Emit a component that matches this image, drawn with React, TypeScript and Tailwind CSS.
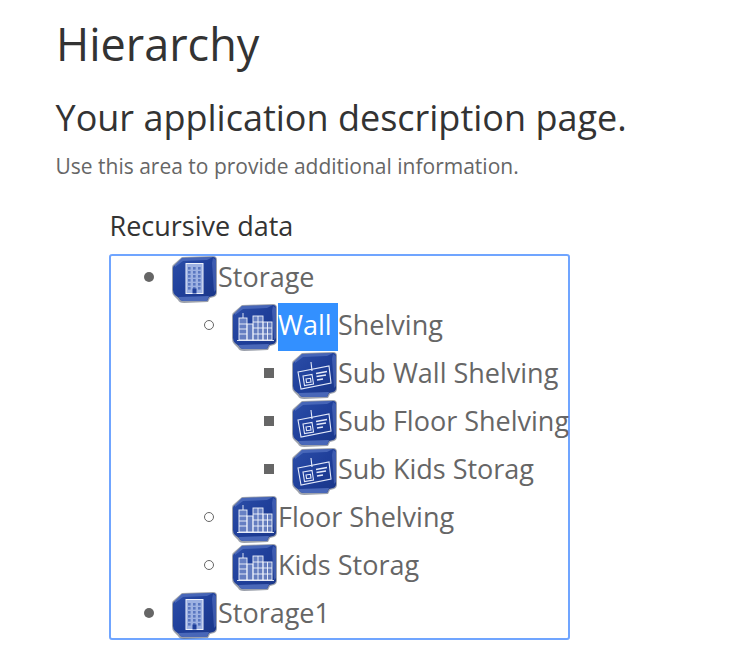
type Kind = "tower" | "city" | "plan";
type Mark = "disc" | "circle" | "square";

function NodeIcon({ kind }: { kind: Kind }) {
  const id = `grad-${kind}`;
  return (
    <svg width="48" height="48" viewBox="0 0 48 48" className="block shrink-0 blur-[0.4px]">
      <defs>
        <linearGradient id={id} x1="0" y1="0" x2="1" y2="1">
          <stop offset="0" stopColor="#2c4ea8" />
          <stop offset="0.5" stopColor="#1f3f9a" />
          <stop offset="1" stopColor="#1a3688" />
        </linearGradient>
      </defs>
      <path d="M12 2 L43 1 Q47 1 47 5 L47 37 Q47 41 44 42 L40 43 L38 47 L14 48 Q9 48 8 45 L4 41 Q2 39 2 35 L2 13 Q2 10 4 9 Z" fill="#5a6274" opacity="0.6" />
      <path d="M12 3 L43 2 Q46 2 46 5 L46 37 Q46 40 43 41 L39 42 L37 46 L14 46 Q10 46 9 43 L5 40 Q3 38 3 35 L3 13 Q3 11 5 10 Z" fill={`url(#${id})`} />
      <path d="M12 3 L43 2 L37 5 L13 6 L5 12 L5 10 Z" fill="#5d7bc8" opacity="0.6" />
      <path d="M9 42 L39 41 L37 46 L14 46 Q10 46 9 43 Z" fill="#4f6dbd" opacity="0.9" />
      <path d="M43 3 L46 5 L46 35 L44 37 L42 8 Z" fill="#5e7ac8" opacity="0.5" />
      {kind === "tower" && (
        <g>
          <rect x="16" y="8.5" width="17" height="30" fill="#9db1e2" stroke="#eef2fc" strokeWidth="1" />
          <g fill="#5a77c0">
            {[12, 16, 20, 24, 28, 32].map((y) =>
              [18, 23, 28].map((x) => <rect key={`${x}-${y}`} x={x} y={y} width="2.6" height="2.6" />),
            )}
          </g>
          <rect x="22.5" y="33.5" width="4" height="5" fill="#1f3f9a" />
        </g>
      )}
      {kind === "city" && (
        <g stroke="#f2f5fd" fill="#a9bbe8" fillOpacity="0.5" strokeWidth="0.9">
          <rect x="9" y="15" width="8" height="22" />
          <rect x="17" y="21" width="6" height="16" />
          <rect x="23" y="13" width="10" height="24" />
          <rect x="33" y="19" width="9" height="18" />
          <path d="M7 37.5 H44 M13 10 V15 M9 21 H17 M9 26 H17 M9 31 H17 M23 19 H33 M23 25 H33 M23 31 H33 M33 25 H42 M33 31 H42 M28 13 V37 M37.5 19 V37" fill="none" />
        </g>
      )}
      {kind === "plan" && (
        <g stroke="#e4eafa" fill="none" strokeWidth="1.1">
          <path d="M8 21 L39 15 L41 32 L11 38 Z" />
          <path d="M13 25 L22 23.5 L23.5 33 L14.5 34.5 Z M16 28 L20.5 27.3 L21 31 L16.6 31.7 Z" />
          <path d="M26 22.5 L37 20.5 M26.5 25.5 L36 24 M27 29 L33 28" strokeWidth="1.4" />
          <path d="M21 11 L22 20" />
        </g>
      )}
    </svg>
  );
}

function Marker({ mark }: { mark: Mark }) {
  if (mark === "disc") return <span className="mt-[17px] mr-4 -ml-[26px] size-2.5 shrink-0 rounded-full bg-[#666]" />;
  if (mark === "circle") return <span className="mt-[17px] mr-4 -ml-[26px] size-2.5 shrink-0 rounded-full border border-[#666]" />;
  return <span className="mt-[17px] mr-4 -ml-[26px] size-2.5 shrink-0 bg-[#666]" />;
}

function Label({ kind, mark, children }: { kind: Kind; mark: Mark; children: React.ReactNode }) {
  return (
    <div className="flex h-12 items-start whitespace-pre">
      <Marker mark={mark} />
      <NodeIcon kind={kind} />
      {children}
    </div>
  );
}

function T({ children, selected }: { children: React.ReactNode; selected?: boolean }) {
  return selected ? (
    <span className="h-12 w-[60px] bg-[#3390ff] pb-1 leading-[44px] text-white">{children}</span>
  ) : (
    <span className="h-12 pb-1 leading-[44px]">{children}</span>
  );
}

export default function App() {
  return (
    <div className="h-[671px] overflow-hidden bg-white px-14 font-['Open_Sans','Noto_Sans',sans-serif] text-[#666]">
      <h1 className="pt-[14px] text-[45px] leading-[60px] font-normal text-[#333]">Hierarchy</h1>
      <h2 className="mt-[22px] -ml-[0.5px] text-[36px] leading-[44px] font-normal text-[#333]">Your application description page.</h2>
      <p className="mt-[11px] -ml-[0.5px] text-[21px] leading-[30px]">Use this area to provide additional information.</p>
      <div className="mt-[29px] ml-[54px]">
        <h3 className="-ml-[0.5px] text-[27px] leading-[32px] font-normal text-[#333]">Recursive data</h3>
        <div className="mt-[12px] -ml-px h-[386px] w-[461px] rounded-[3px] border-2 border-[#70a5ff] text-[27px] leading-[48px]">
          <ul className="-mt-px list-none pl-[59px]">
            <li>
              <Label kind="tower" mark="disc"><T>Storage</T></Label>
              <ul className="list-none pl-[60px]">
                <li>
                  <Label kind="city" mark="circle">
                    <T selected>{"Wall "}</T><T>Shelving</T>
                  </Label>
                  <ul className="list-none pl-[60px]">
                    <li><Label kind="plan" mark="square"><T>Sub Wall Shelving</T></Label></li>
                    <li><Label kind="plan" mark="square"><T>Sub Floor Shelving</T></Label></li>
                    <li><Label kind="plan" mark="square"><T>Sub Kids Storag</T></Label></li>
                  </ul>
                </li>
                <li><Label kind="city" mark="circle"><T>Floor Shelving</T></Label></li>
                <li><Label kind="city" mark="circle"><T>Kids Storag</T></Label></li>
              </ul>
            </li>
            <li><Label kind="tower" mark="disc"><T>Storage1</T></Label></li>
          </ul>
        </div>
      </div>
    </div>
  );
}
